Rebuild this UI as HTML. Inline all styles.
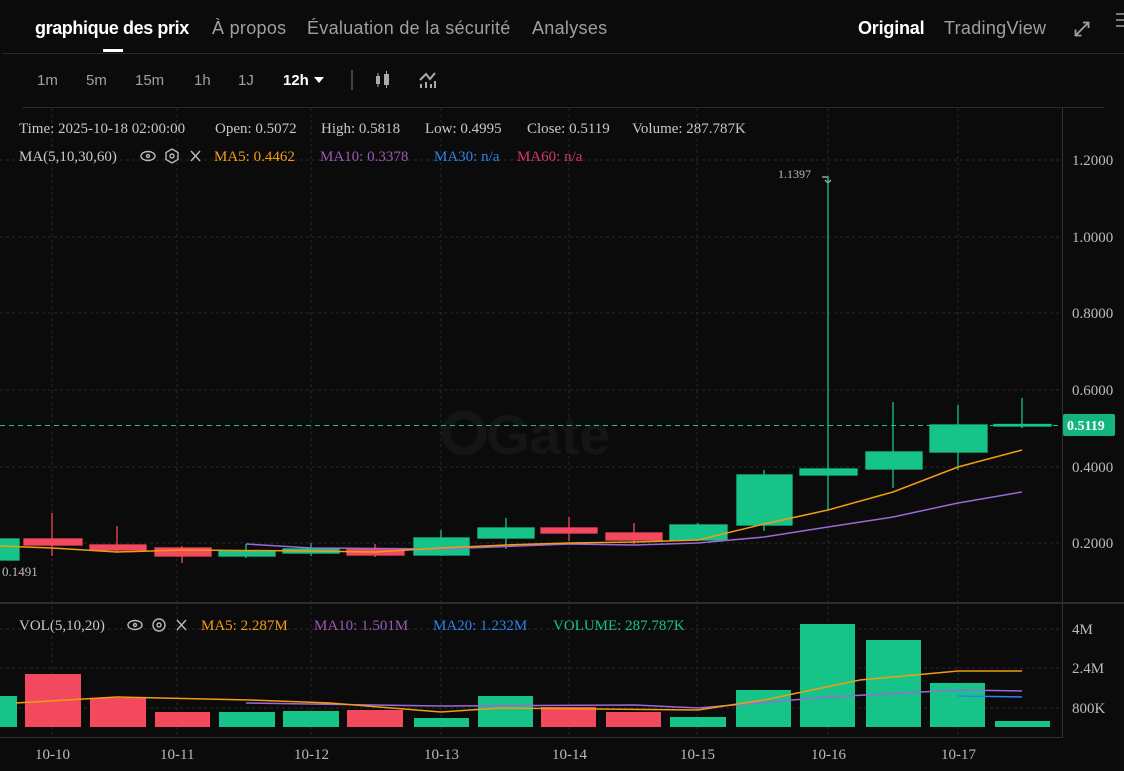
<!DOCTYPE html>
<html><head><meta charset="utf-8"><style>
html,body{margin:0;padding:0;background:#0b0b0b;width:1124px;height:771px;overflow:hidden}
svg{display:block}
.tab{font-family:"Liberation Sans",Arial,sans-serif;font-size:18px;fill:#9aa0a6;letter-spacing:0.3px}
.tb{font-family:"Liberation Sans",Arial,sans-serif;font-size:15px;fill:#9aa0a6}
.s{font-family:"Liberation Serif",serif;font-size:15px}
</style></head><body>
<svg width="1124" height="771" viewBox="0 0 1124 771" xmlns="http://www.w3.org/2000/svg">
<rect width="1124" height="771" fill="#0b0b0b"/>
<text x="35" y="34" class="tab" style="fill:#fff;font-weight:bold;letter-spacing:-0.4px">graphique des prix</text>
<text x="212" y="34" class="tab">À propos</text>
<text x="307" y="34" class="tab">Évaluation de la sécurité</text>
<text x="532" y="34" class="tab">Analyses</text>
<text x="858" y="34" class="tab" style="fill:#fff;font-weight:bold;letter-spacing:-0.2px">Original</text>
<text x="944" y="34" class="tab">TradingView</text>
<g stroke="#9aa0a6" stroke-width="1.8" fill="none"><path d="M1076 35 L1088 23 M1083 22.5 L1088.5 22.5 L1088.5 28 M1075.5 29.5 L1075.5 35.5 L1081.5 35.5"/></g>
<g stroke="#777" stroke-width="2"><path d="M1116 14h8M1116 20h8M1116 26h8"/></g>
<rect x="103" y="49" width="20" height="3" fill="#fff"/>
<rect x="2" y="53" width="1122" height="1" fill="#2a2a2a"/>
<text x="37" y="85" class="tb">1m</text>
<text x="86" y="85" class="tb">5m</text>
<text x="135" y="85" class="tb">15m</text>
<text x="194" y="85" class="tb">1h</text>
<text x="238" y="85" class="tb">1J</text>
<text x="283" y="85" class="tb" style="fill:#fff;font-weight:bold">12h</text>
<path d="M314 77 L324 77 L319 83 Z" fill="#fff"/>
<rect x="351" y="70" width="2" height="20" fill="#444"/>
<g fill="#aaa"><rect x="376" y="76" width="4" height="8"/><rect x="377.5" y="73" width="1" height="14"/><rect x="384" y="74" width="5" height="11"/><rect x="386" y="71" width="1" height="17"/></g>
<g stroke="#aaa" stroke-width="2" fill="none"><path d="M420 80 L426 74 L430 79 L435 73"/><path d="M421 88v-4M426 88v-6M431 88v-4M435 88v-7"/></g>
<rect x="22" y="107" width="1082" height="1" fill="#2a2a2a"/>
<g stroke="#2a2a2a" stroke-width="1" stroke-dasharray="3,3">
<path d="M52 108V738M177 108V738M311 108V738M441 108V738M569 108V738M697 108V738M828 108V738M958 108V738"/>
<path d="M0 160H1063M0 237H1063M0 313H1063M0 390H1063M0 467H1063M0 543H1063M0 629H1063M0 668H1063M0 708H1063"/>
</g>
<rect x="1062" y="108" width="1" height="630" fill="#333"/>
<rect x="0" y="602" width="1124" height="2" fill="#2c2c2c"/>
<rect x="0" y="737" width="1063" height="1" fill="#333"/>
<g><circle cx="464" cy="433" r="18" fill="none" stroke="#151515" stroke-width="9"/>
<text x="486" y="454" style="font-family:'Liberation Sans',sans-serif;font-size:56px;font-weight:bold;fill:#151515">Gate</text></g>
<text x="19" y="133" class="s" fill="#c8c8c8">Time: 2025-10-18 02:00:00</text>
<text x="215" y="133" class="s" fill="#c8c8c8">Open: 0.5072</text>
<text x="321" y="133" class="s" fill="#c8c8c8">High: 0.5818</text>
<text x="425" y="133" class="s" fill="#c8c8c8">Low: 0.4995</text>
<text x="527" y="133" class="s" fill="#c8c8c8">Close: 0.5119</text>
<text x="632" y="133" class="s" fill="#c8c8c8">Volume: 287.787K</text>
<text x="19" y="161" class="s" fill="#c8c8c8">MA(5,10,30,60)</text>
<g stroke="#bbb" stroke-width="1.4" fill="none"><ellipse cx="148" cy="156" rx="7" ry="4.5"/><circle cx="148" cy="156" r="1.5"/><path d="M172 149l6 3.5v7l-6 3.5-6-3.5v-7z"/><circle cx="172" cy="156" r="2"/><path d="M191 151l9 10M200 151l-9 10"/></g>
<text x="214" y="161" class="s" fill="#f39c12">MA5: 0.4462</text>
<text x="320" y="161" class="s" fill="#9b59b6">MA10: 0.3378</text>
<text x="434" y="161" class="s" fill="#2f80ed">MA30: n/a</text>
<text x="517" y="161" class="s" fill="#d63865">MA60: n/a</text>
<g class="s" fill="#bbb">
<text x="1072" y="165">1.2000</text><text x="1072" y="242">1.0000</text><text x="1072" y="318">0.8000</text><text x="1072" y="395">0.6000</text><text x="1072" y="472">0.4000</text><text x="1072" y="548">0.2000</text>
<text x="1072" y="634">4M</text><text x="1072" y="673">2.4M</text><text x="1072" y="713">800K</text>
<text x="35" y="759">10-10</text><text x="160" y="759">10-11</text><text x="294" y="759">10-12</text><text x="424" y="759">10-13</text><text x="552" y="759">10-14</text><text x="680" y="759">10-15</text><text x="811" y="759">10-16</text><text x="941" y="759">10-17</text>
</g>
<text x="2" y="576" class="s" fill="#bbb" style="font-size:13px">0.1491</text>
<text x="778" y="178" class="s" fill="#bbb" style="font-size:12px">1.1397</text>
<path d="M822 177h6v5M825 180l3 3 3-3" stroke="#bbb" fill="none" stroke-width="1.2"/>
<path d="M0 425.5H1062" stroke="#17c58a" stroke-dasharray="5,4" stroke-width="1"/>
<rect x="1063" y="414" width="52" height="22" rx="2" fill="#13b47f"/>
<text x="1067" y="430" class="s" fill="#fff" style="font-size:14px;font-weight:bold">0.5119</text>
<g stroke-width="1.3">
<g fill="#16c48a" stroke="#16c48a">
<rect x="-40" y="539" width="59" height="21"/>
<path d="M246 544V558M311 543V556M441 530V556M506 518V549M698 523V541M764 470V531M828 177V510M893 402V488M958 405V470M1022 398V428"/>
<rect x="219" y="551" width="56" height="5"/><rect x="283" y="549" width="56" height="4"/>
<rect x="414" y="538" width="55" height="17"/><rect x="478" y="528" width="56" height="10"/>
<rect x="670" y="525" width="57" height="15"/><rect x="737" y="475" width="55" height="50"/>
<rect x="800" y="469" width="57" height="6"/><rect x="866" y="452" width="56" height="17"/>
<rect x="930" y="425" width="57" height="27"/><rect x="994" y="424.5" width="57" height="1.5"/>
</g>
<g fill="#f2495f" stroke="#f2495f">
<path d="M52 513V556M117 526V553M182 546V563M375 544V557M569 517V541M634 523V545"/>
<rect x="24" y="539" width="58" height="6"/><rect x="90" y="545" width="56" height="5"/>
<rect x="155" y="548" width="56" height="8"/><rect x="347" y="549" width="57" height="6"/>
<rect x="541" y="528" width="56" height="5"/><rect x="606" y="533" width="56" height="7"/>
</g>
</g>
<polyline fill="none" stroke="#9b6ad6" stroke-width="1.5" points="246,544 311,548 441,549 569,544 634,545 698,543 764,537 828,527 893,517 958,503 1022,492"/>
<polyline fill="none" stroke="#f39c12" stroke-width="1.5" points="0,546 52,548 117,552 182,550 311,551 375,552 441,548 506,545 569,543 634,542 698,540 764,524 828,510 893,492 958,467 1022,450"/>
<text x="19" y="630" class="s" fill="#c8c8c8">VOL(5,10,20)</text>
<g stroke="#bbb" stroke-width="1.4" fill="none"><ellipse cx="135" cy="625" rx="7" ry="4.5"/><circle cx="135" cy="625" r="1.5"/><circle cx="159" cy="625" r="6"/><circle cx="159" cy="625" r="2"/><path d="M177 620l9 10M186 620l-9 10"/></g>
<text x="201" y="630" class="s" fill="#f39c12">MA5: 2.287M</text>
<text x="314" y="630" class="s" fill="#9b59b6">MA10: 1.501M</text>
<text x="433" y="630" class="s" fill="#2f80ed">MA20: 1.232M</text>
<text x="553" y="630" class="s" fill="#16c48a">VOLUME: 287.787K</text>
<g fill="#16c48a">
<rect x="-40" y="696" width="57" height="31"/><rect x="219" y="712" width="56" height="15"/><rect x="283" y="711" width="56" height="16"/>
<rect x="414" y="718" width="55" height="9"/><rect x="478" y="696" width="55" height="31"/><rect x="670" y="717" width="56" height="10"/>
<rect x="736" y="690" width="55" height="37"/><rect x="800" y="624" width="55" height="103"/><rect x="866" y="640" width="55" height="87"/>
<rect x="930" y="683" width="55" height="44"/><rect x="995" y="721" width="55" height="6"/>
</g>
<g fill="#f2495f">
<rect x="25" y="674" width="56" height="53"/><rect x="90" y="698" width="56" height="29"/><rect x="155" y="712" width="55" height="15"/>
<rect x="347" y="710" width="56" height="17"/><rect x="541" y="707" width="55" height="20"/><rect x="606" y="712" width="55" height="15"/>
</g>
<polyline fill="none" stroke="#2f80ed" stroke-width="1.5" points="958,696 1022,697"/>
<polyline fill="none" stroke="#9b6ad6" stroke-width="1.5" points="246,703 441,706 634,705 698,708 828,697 958,690 1022,691"/>
<polyline fill="none" stroke="#f39c12" stroke-width="1.5" points="16,703 117,697 250,700 330,703 441,712 500,708 698,710 764,700 860,680 958,671 1022,671"/>
</svg>
</body></html>
